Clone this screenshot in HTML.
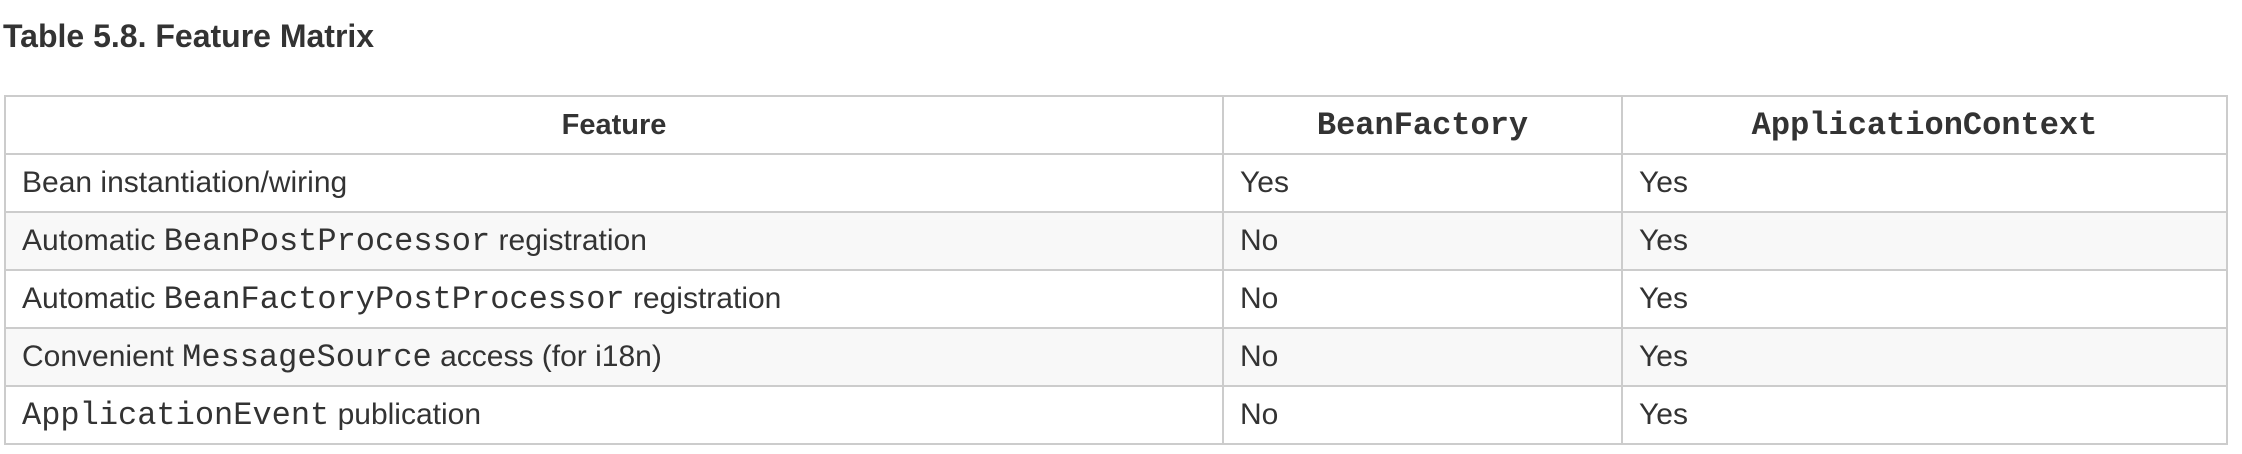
<!DOCTYPE html>
<html><head><meta charset="utf-8"><style>
html,body{margin:0;padding:0;background:#fff;width:2242px;height:454px;overflow:hidden}
body{font-family:"Liberation Sans",Arial,sans-serif;color:#333}
h3{position:absolute;left:3px;top:16px;margin:0;font-size:32px;font-weight:bold;line-height:40px;color:#333}
table{position:absolute;left:4px;top:95px;border-collapse:collapse;width:2222px;table-layout:fixed}
td,th{border:2px solid #ccc;padding:0 0 0 16px;height:56px;font-size:30px;text-align:left;vertical-align:middle}
th{text-align:center;padding:0;font-weight:bold;font-size:29px}
tr.alt td{background:#f8f8f8}
code{font-family:"Liberation Mono",monospace;font-size:32px}
th code{font-weight:bold}
</style></head><body>
<h3>Table 5.8. Feature Matrix</h3>
<table>
<colgroup><col style="width:1218px"><col style="width:399px"><col style="width:605px"></colgroup>
<tr><th>Feature</th><th><code>BeanFactory</code></th><th><code>ApplicationContext</code></th></tr>
<tr><td>Bean instantiation/wiring</td><td>Yes</td><td>Yes</td></tr>
<tr class="alt"><td>Automatic <code>BeanPostProcessor</code> registration</td><td>No</td><td>Yes</td></tr>
<tr><td>Automatic <code>BeanFactoryPostProcessor</code> registration</td><td>No</td><td>Yes</td></tr>
<tr class="alt"><td>Convenient <code>MessageSource</code> access (for i18n)</td><td>No</td><td>Yes</td></tr>
<tr><td><code>ApplicationEvent</code> publication</td><td>No</td><td>Yes</td></tr>
</table>
</body></html>
